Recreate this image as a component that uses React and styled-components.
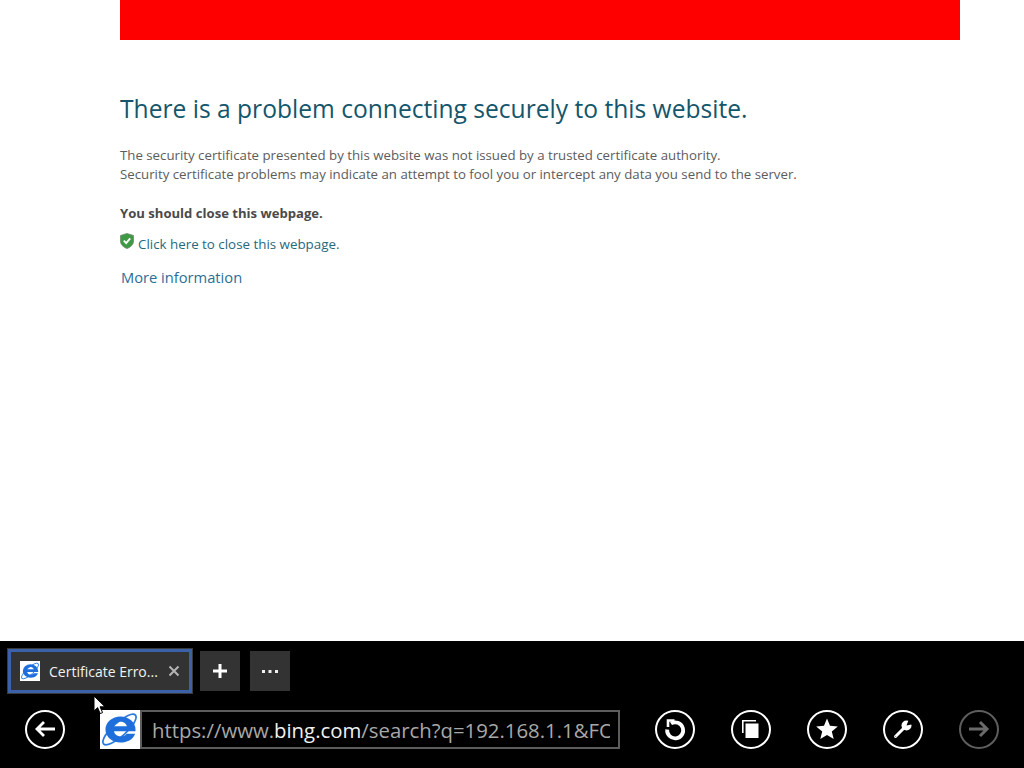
import React from 'react'
import styled, { createGlobalStyle } from 'styled-components';

const Global = createGlobalStyle`
	html, body { margin: 0; padding: 0; background: #fff; }
	body { font-family: "Open Sans", "Noto Sans", "Liberation Sans", sans-serif; }
`;

const Page = styled.div`
	position: relative;
	width: 1024px;
	height: 768px;
	overflow: hidden;
	display: flex;
	flex-direction: column;
`;

const Content = styled.main`
	flex: 1;
	padding: 0 64px 0 120px;
	background: #fff;
`;

const RedBar = styled.div`
	height: 40px;
	background: #ff0000;
`;

const Title = styled.h1`
	margin: 51px 0 0;
	font-size: 24.6px;
	line-height: 36px;
	font-weight: 400;
	color: #14566b;
	white-space: nowrap;
`;

const Para = styled.p`
	margin: 19px 0 0;
	font-size: 13.25px;
	line-height: 19px;
	color: #5c5c5c;
	white-space: nowrap;
`;

const Strong = styled.p`
	margin: 20px 0 0;
	font-size: 13.1px;
	line-height: 19px;
	font-weight: 700;
	color: #4a4a4a;
`;

const CloseRow = styled.div`
	display: flex;
	align-items: flex-start;
	gap: 4px;
	margin-top: 10px;
	height: 23px;
`;

const CloseLink = styled.a`
	font-size: 13.35px;
	line-height: 23px;
	color: #1f6a80;
`;

const More = styled.a`
	display: block;
	margin: 10px 0 0 1px;
	font-size: 14.7px;
	line-height: 22px;
	color: #2a6f97;
`;

const Bar = styled.footer`
	height: 127px;
	background: #000;
	display: flex;
	flex-direction: column;
`;

const TabRow = styled.div`
	display: flex;
	align-items: center;
	height: 60px;
	padding: 0 0 0 8px;
`;

const Tab = styled.div`
	box-sizing: border-box;
	width: 184px;
	height: 44px;
	display: flex;
	align-items: center;
	padding: 0 9px 0 9px;
	background: #333;
	border: 3px solid #3b62a8;
	box-shadow: 0 0 0 1px #3a3a3a;
	color: #f2f2f2;
	font-size: 14px;
`;

const TabIcon = styled.div`
	width: 20px;
	height: 20px;
	background: #fff;
	flex: none;
`;

const TabLabel = styled.span`
	flex: 1;
	margin-left: 9px;
	white-space: nowrap;
`;

const TabButton = styled.div`
	width: 40px;
	height: 40px;
	margin-left: ${p => p.$gap}px;
	background: #333;
	display: flex;
	align-items: center;
	justify-content: center;
`;

const NavRow = styled.div`
	display: flex;
	align-items: center;
	height: 56px;
	padding: 0 0 0 25px;
`;

const Address = styled.div`
	display: flex;
	align-items: stretch;
	margin-left: 35px;
	margin-right: 35px;
`;

const Favicon = styled.div`
	width: 40px;
	height: 39px;
	background: #fff;
`;

const UrlBox = styled.div`
	box-sizing: border-box;
	width: 480px;
	height: 39px;
	border: 2px solid #5c5c5c;
	padding: 1px 8px 0 10px;
	display: flex;
	align-items: center;
`;

const UrlText = styled.div`
	width: 100%;
	overflow: hidden;
	white-space: nowrap;
	font-size: 20.35px;
	color: #a8a8a8;
`;

const UrlHost = styled.span`
	color: #f0f0f0;
`;

const Round = styled.div`
	box-sizing: border-box;
	width: 40px;
	height: 39px;
	margin-right: ${p => p.$gap || 0}px;
	border-radius: 50%;
	border: 2.5px solid ${p => p.$off ? '#5e5e5e' : '#fff'};
	display: flex;
	align-items: center;
	justify-content: center;
	flex: none;
`;

const Cursor = styled.svg`
	position: absolute;
	left: 93px;
	top: 695px;
`;

const IeLogo = ({ size }) => (
	<svg width={size} height={size} viewBox="0 0 40 40" style={{ display: 'block' }}>
		<ellipse cx="20" cy="20" rx="22" ry="7" transform="rotate(-42 20 20)" fill="none" stroke="#2a7be0" strokeWidth="1.800" />
		<g transform="translate(21 20) scale(1.100 .95) translate(-21 -21)">
			<path fillRule="evenodd" fill="#1e6fdc" d="M21 7a14 14 0 0 1 14 14v2H15c.5 3.500 3 5.500 6.200 5.500 2.600 0 4.500-1.200 5.500-3h8C32.700 32 27 35 21 35A14 14 0 0 1 21 7zM15 17.500h12c-.5-3-3-5-6-5s-5.500 2-6 5z" />
		</g>
	</svg>
);

const Shield = () => (
	<svg width="14" height="16" viewBox="0 0 14 16">
		<path d="M7 .5 13.500 2.500V8c0 3.500-2.600 6-6.500 7.500C3.100 14 .5 11.500.5 8V2.500z" fill="#3f9a45" stroke="#6d8a6d" strokeWidth=".8" />
		<path d="M3.800 7.600 6.200 10l4-4.600" fill="none" stroke="#fff" strokeWidth="1.900" />
	</svg>
);

const Header = () => (
	<Content>
		<RedBar />
		<Title>There is a problem connecting securely to this website.</Title>
		<Para>
			The security certificate presented by this website was not issued by a trusted certificate authority.<br />
			Security certificate problems may indicate an attempt to fool you or intercept any data you send to the server.
		</Para>
		<Strong>You should close this webpage.</Strong>
		<CloseRow>
			<Shield />
			<CloseLink>Click here to close this webpage.</CloseLink>
		</CloseRow>
		<More>More information</More>
	</Content>
);

const App = () => {
	return (
		<Page>
			<Global />
			<Header />
			<Bar>
				<TabRow>
					<Tab>
						<TabIcon><IeLogo size={20} /></TabIcon>
						<TabLabel>Certificate Erro...</TabLabel>
						<svg width="12" height="12" viewBox="0 0 12 12"><path d="M1.500 1.500l9 9m0-9l-9 9" stroke="#b5b5b5" strokeWidth="2" /></svg>
					</Tab>
					<TabButton $gap={8}>
						<svg width="14" height="14" viewBox="0 0 14 14"><path d="M7 0v14M0 7h14" stroke="#fff" strokeWidth="3" /></svg>
					</TabButton>
					<TabButton $gap={10}>
						<svg width="16" height="4" viewBox="0 0 16 4" fill="#f0f0f0"><rect x="0" y="1" width="3" height="3" /><rect x="6.500" y="1" width="3" height="3" /><rect x="13" y="1" width="3" height="3" /></svg>
					</TabButton>
				</TabRow>
				<NavRow>
					<Round>
						<svg width="22" height="18" viewBox="0 0 22 18" fill="none" stroke="#fff" strokeWidth="2.800"><path d="M21 9H3M10 2 3 9l7 7" /></svg>
					</Round>
					<Address>
						<Favicon><IeLogo size={39} /></Favicon>
						<UrlBox>
							<UrlText>https://www.<UrlHost>bing.com</UrlHost>/search?q=192.168.1.1&amp;FOR</UrlText>
						</UrlBox>
					</Address>
					<Round $gap={36}>
						<svg width="24" height="24" viewBox="0 0 24 24" fill="none" stroke="#fff"><path d="M8 6.500A8 8 0 1 1 4.200 12.500" strokeWidth="3.800" /><path d="M11.500 3.500H5V10" strokeWidth="2.600" /></svg>
					</Round>
					<Round $gap={36}>
						<svg width="18" height="18" viewBox="0 0 18 18" fill="#fff"><path d="M0 0H14V1.600H1.600V13H0z" /><rect x="3.500" y="3.500" width="13" height="14.500" /></svg>
					</Round>
					<Round $gap={36}>
						<svg width="24" height="24" viewBox="0 0 24 24" fill="#fff"><path d="M12 1.500l3 7.300 7.800.6-6 5 1.900 7.600L12 18l-6.700 4 1.900-7.600-6-5 7.800-.6z" /></svg>
					</Round>
					<Round $gap={36}>
						<svg width="24" height="24" viewBox="0 0 24 24"><path d="M4.500 19.500 14 10" stroke="#fff" strokeWidth="3" strokeLinecap="round" /><circle cx="15.500" cy="8.500" r="5" fill="#fff" /><path d="M15.500 8.500 18 2l5 5z" fill="#000" /><circle cx="4.500" cy="19.500" r=".8" fill="#999" /></svg>
					</Round>
					<Round $off>
						<svg width="22" height="18" viewBox="0 0 22 18" fill="none" stroke="#6a6a6a" strokeWidth="3"><path d="M1 9h18M12 2l7 7-7 7" /></svg>
					</Round>
				</NavRow>
			</Bar>
			<Cursor width="14" height="20" viewBox="0 0 14 20">
				<path d="M1 1v15l3.600-3.400 2.600 6 2.400-1-2.600-5.800H12z" fill="#fff" stroke="#000" strokeWidth="1" />
			</Cursor>
		</Page>
	);
}

export default App;
